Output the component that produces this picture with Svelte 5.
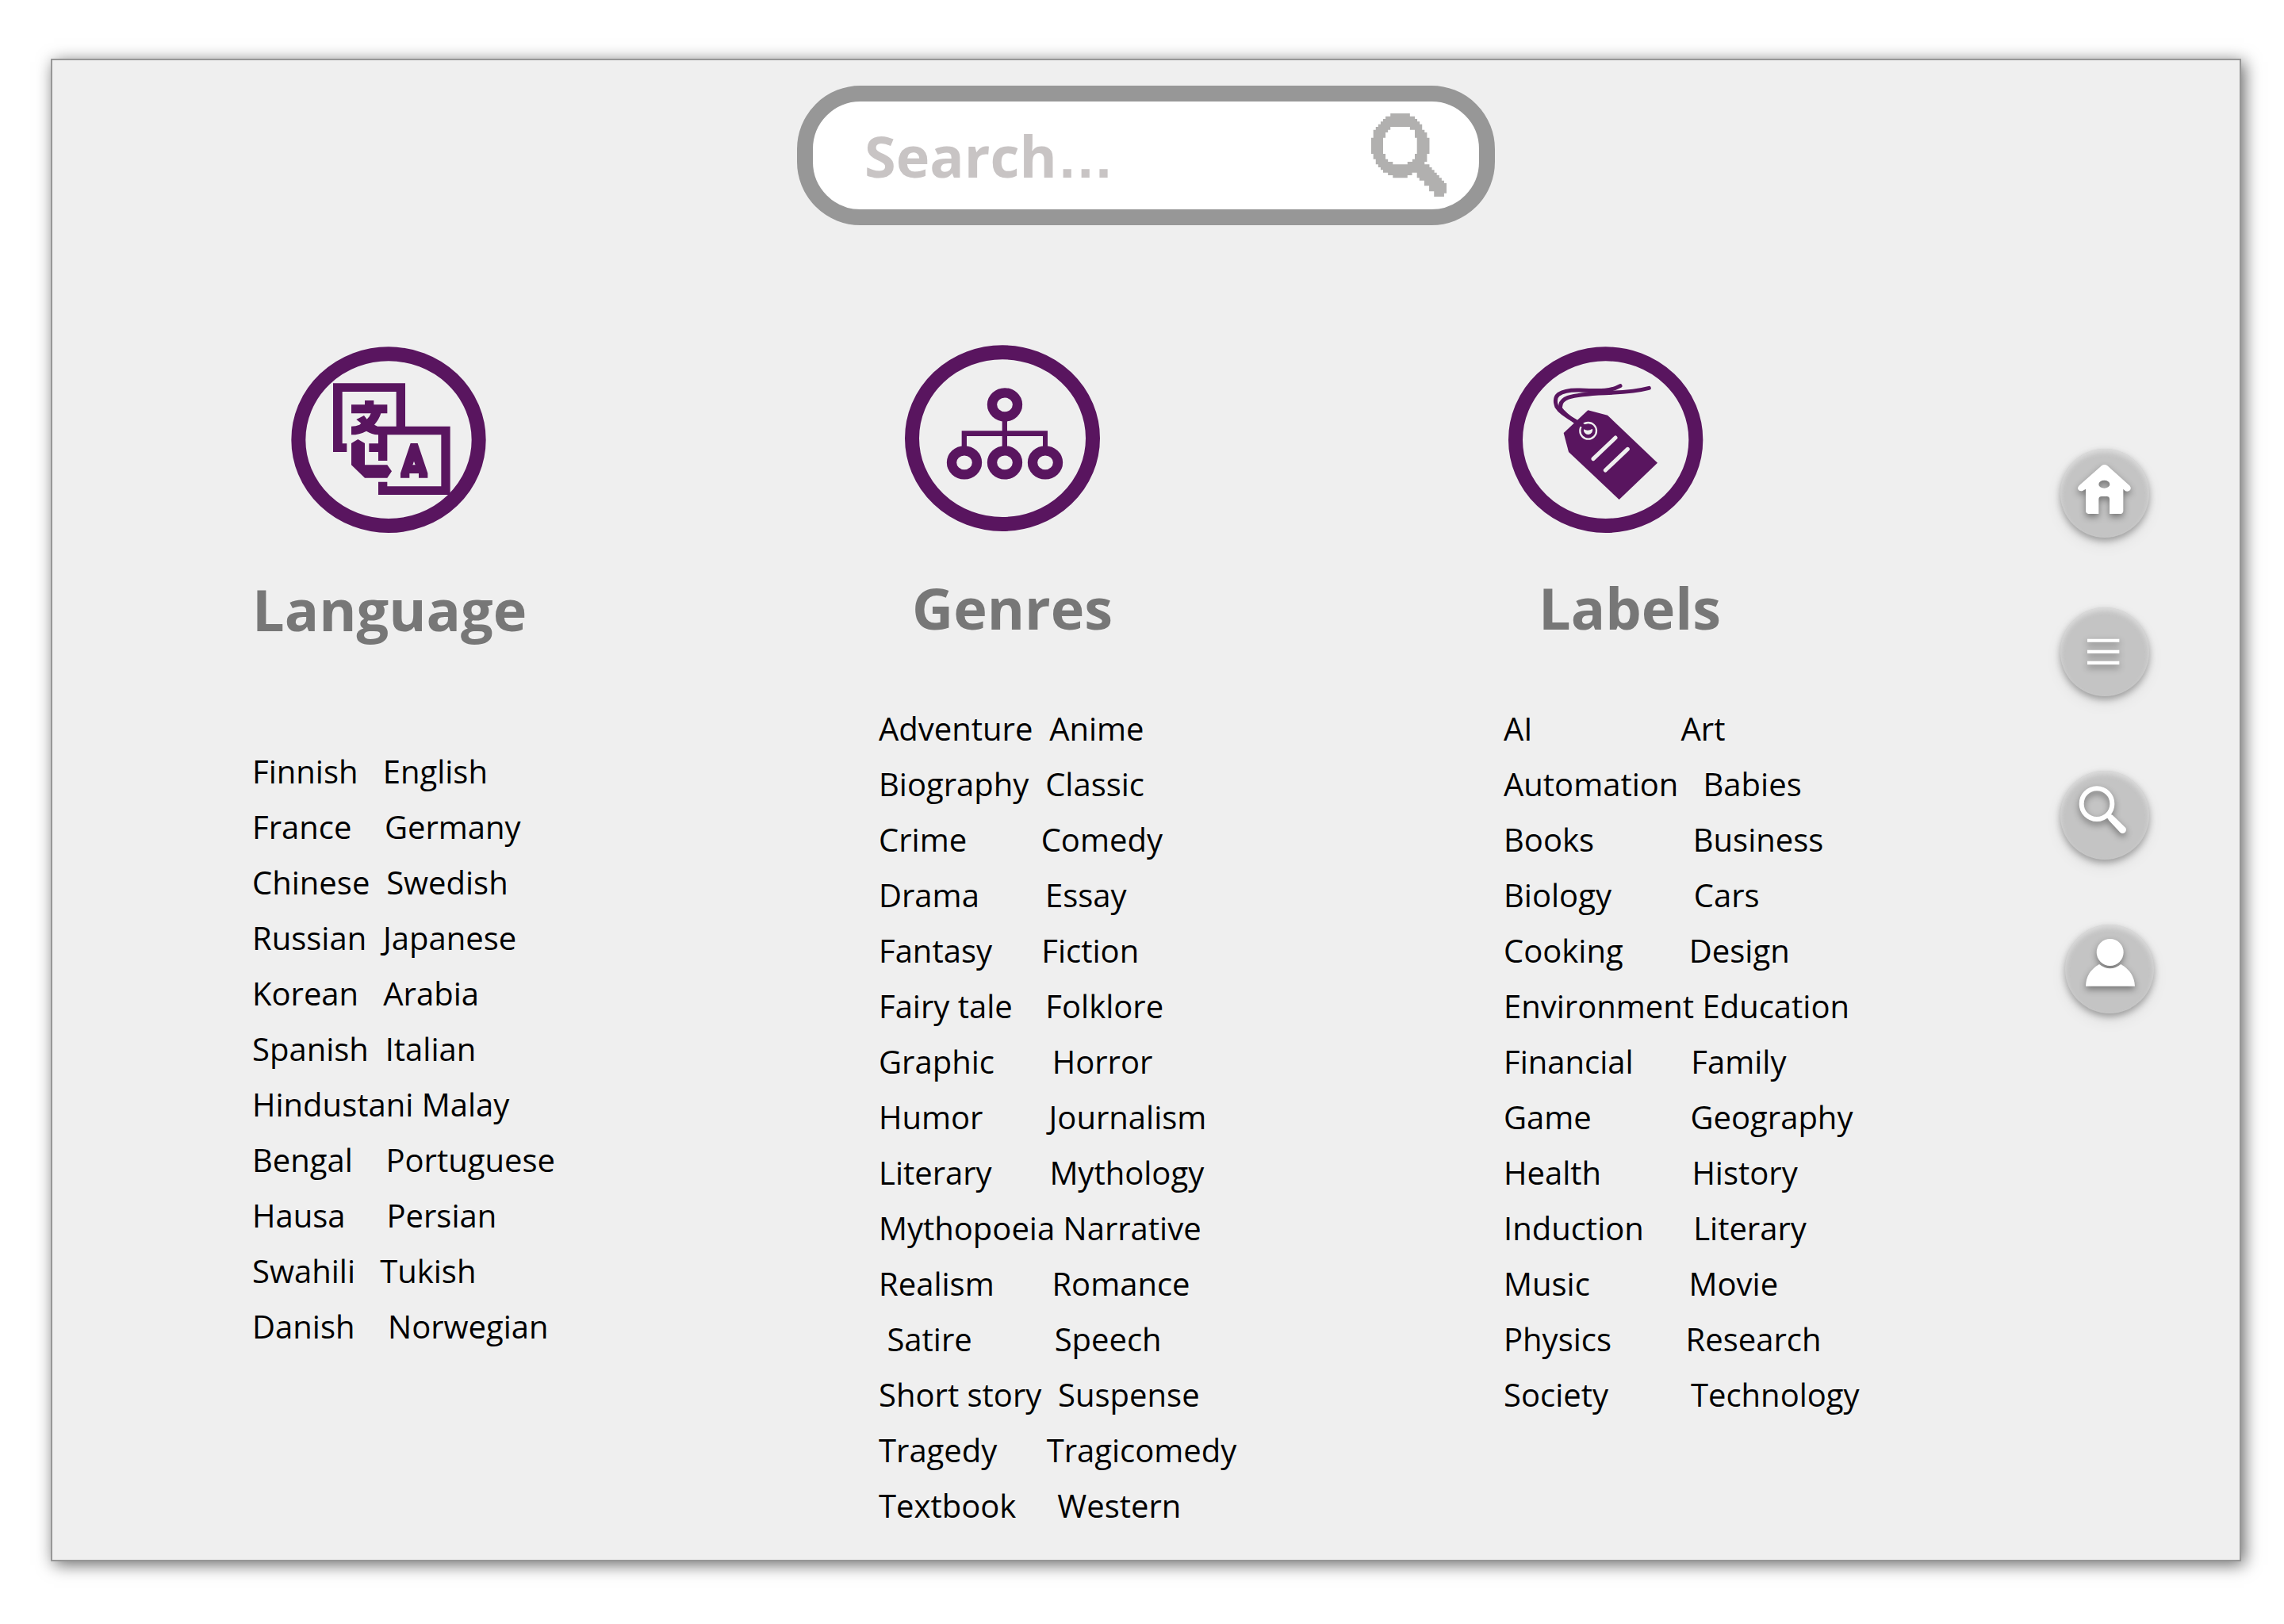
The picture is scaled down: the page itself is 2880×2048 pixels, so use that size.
<script>
  const columns = [
    {
      id: 'language',
      title: 'Language',
      rows: [
        ['Finnish', 3, 'English'],
        ['France', 4, 'Germany'],
        ['Chinese', 2, 'Swedish'],
        ['Russian', 2, 'Japanese'],
        ['Korean', 3, 'Arabia'],
        ['Spanish', 2, 'Italian'],
        ['Hindustani', 1, 'Malay'],
        ['Bengal', 4, 'Portuguese'],
        ['Hausa', 5, 'Persian'],
        ['Swahili', 3, 'Tukish'],
        ['Danish', 4, 'Norwegian']
      ]
    },
    {
      id: 'genres',
      title: 'Genres',
      rows: [
        ['Adventure', 2, 'Anime'],
        ['Biography', 2, 'Classic'],
        ['Crime', 9, 'Comedy'],
        ['Drama', 8, 'Essay'],
        ['Fantasy', 6, 'Fiction'],
        ['Fairy tale', 4, 'Folklore'],
        ['Graphic', 7, 'Horror'],
        ['Humor', 8, 'Journalism'],
        ['Literary', 7, 'Mythology'],
        ['Mythopoeia', 1, 'Narrative'],
        ['Realism', 7, 'Romance'],
        [' Satire', 10, 'Speech'],
        ['Short story', 2, 'Suspense'],
        ['Tragedy', 6, 'Tragicomedy'],
        ['Textbook', 5, 'Western']
      ]
    },
    {
      id: 'labels',
      title: 'Labels',
      rows: [
        ['AI', 18, 'Art'],
        ['Automation', 3, 'Babies'],
        ['Books', 12, 'Business'],
        ['Biology', 10, 'Cars'],
        ['Cooking', 8, 'Design'],
        ['Environment', 1, 'Education'],
        ['Financial', 7, 'Family'],
        ['Game', 12, 'Geography'],
        ['Health', 11, 'History'],
        ['Induction', 6, 'Literary'],
        ['Music', 12, 'Movie'],
        ['Physics', 9, 'Research'],
        ['Society', 10, 'Technology']
      ]
    }
  ];
</script>

<div class="page">
  <main class="panel">
    <form class="search" role="search" onsubmit={(e) => e.preventDefault()}>
      <div class="field">
        <input id="search" type="text" placeholder=" " />
        <label for="search">Search<span>…</span></label>
      </div>
      <button class="go" type="submit" aria-label="Search">
        <svg viewBox="1278 36 247 315" preserveAspectRatio="none" aria-hidden="true">
          <path
            fill="#b1b0af"
            fill-rule="evenodd"
            d="M1341 36H1405V47H1421V57H1429V67H1437V77H1445V98H1453V108H1461V128H1469V189H1461V219H1453V229H1469V240H1477V250H1485V260H1493V270H1501V280H1509V290H1517V300H1525V338H1517V351H1484V331H1468V310H1452V290H1436V280H1428V260H1412V270H1397V280H1349V270H1333V260H1317V250H1309V240H1301V229H1293V209H1285V189H1278V128H1285V98H1293V87H1301V77H1309V67H1317V57H1325V47H1341ZM1341 87V98H1333V108H1325V128H1317V189H1325V209H1333V219H1349V229H1397V219H1413V209H1421V189H1428V128H1421V98H1405V87Z"
          />
        </svg>
      </button>
    </form>

    <div class="content">
      <div class="columns">
        {#each columns as col (col.id)}
          <section class="column {col.id}">
            <div class="badge">
              {#if col.id === 'language'}
                <svg viewBox="51 50 738 708" aria-hidden="true">
                  <ellipse class="ring" cx="420" cy="403" rx="341" ry="325" />
                  <path class="solid" d="M210 189H483V352H653V611H381V562H415V579H619V384H415V482H381V449H346V417H381V384Q355 382 336 370Q310 384 279 384V352Q296 352 310 346L316 340L298 326L327 311L338 325Q350 314 353 303H279V270H330V254H364V270H415V303H391Q384 326 366 346L378 352H449V221H245V417H262V449H210Z" />
                  <path class="solid" d="M279 416L304 401L330 416V498H415L432 522L415 547H330L279 498Z" />
                  <path class="solid" fill-rule="evenodd" d="M503 416H530L568 529V547H534V530H499V547H465V529ZM516 484L511 498H521Z" />
                </svg>
              {:else if col.id === 'genres'}
                <svg viewBox="63 44 738 708" aria-hidden="true">
                  <ellipse class="ring" cx="432" cy="397" rx="342" ry="325" />
                  <path class="solid" d="M431 320H450V369H603V430H585V389H450V430H431V389H297V430H278V369H431Z" />
                  <ellipse class="node" cx="441" cy="270" rx="48" ry="45" />
                  <ellipse class="node" cx="288" cy="489" rx="48" ry="45" />
                  <ellipse class="node" cx="441" cy="489" rx="48" ry="45" />
                  <ellipse class="node" cx="594" cy="489" rx="48" ry="45" />
                </svg>
              {:else}
                <svg viewBox="65 50 738 708" aria-hidden="true">
                  <ellipse class="ring" cx="433" cy="403" rx="341" ry="325" />
                  <path class="solid" d="M366 291L440 310L629 490L484 629L293 449L274 377Z" />
                  <path class="string" d="M352 350Q340 346 318 332Q262 302 248 278Q236 246 254 231Q280 213 335 215Q400 218 430 216Q460 214 488 199" />
                  <path class="string" d="M318 334Q276 305 262 285Q258 255 290 243Q330 230 430 226Q540 222 597 207" />
                  <circle cx="367" cy="369" r="31" fill="none" stroke="#efefef" stroke-width="7" />
                  <path d="M350 363Q366 372 383 361A17 17 0 1 1 350 363Z" fill="#efefef" />
                  <path class="string" d="M320 334L358 355Q366 359 378 353" />
                  <path d="M470 395L386 475M516 438L432 518" fill="none" stroke="#efefef" stroke-width="15" stroke-linecap="round" />
                </svg>
              {/if}
            </div>
            <h2>{col.title}</h2>
            <ul>
              {#each col.rows as [left, gap, right]}
                <li><span>{left}</span>{' '.repeat(gap)}<span>{right}</span></li>
              {/each}
            </ul>
          </section>
        {/each}
      </div>

      <nav aria-label="Main">
        <button type="button" aria-label="Home">
          <svg viewBox="84 78 336 336" aria-hidden="true">
            <path fill="#fff" fill-rule="evenodd" d="M240 142Q251 134 262 142L347 218Q353 226 348 234Q340 242 330 238L322 230V314Q320 324 310 324H270V268Q269 258 260 258H240Q230 258 229 268V324H190Q180 322 180 312V230L168 237Q156 240 150 230Q149 222 156 216ZM229 212A21 15 0 1 0 271 212A21 15 0 1 0 229 212Z" />
          </svg>
        </button>
        <button type="button" aria-label="Menu">
          <svg viewBox="84 678 336 336" aria-hidden="true">
            <path fill="#fff" d="M186 797H307V809H186ZM186 839H307V852H186ZM186 881H307V894H186Z" />
          </svg>
        </button>
        <button type="button" aria-label="Search">
          <svg viewBox="84 96 336 336" aria-hidden="true">
            <circle cx="222" cy="221" r="58" fill="none" stroke="#fff" stroke-width="18" />
            <path fill="#fff" d="M260 272L274 260Q282 262 288 270L331 312Q336 322 328 330Q318 336 310 329L268 284Q264 278 260 272Z" />
          </svg>
        </button>
        <button type="button" aria-label="Profile">
          <svg viewBox="102 678 336 336" aria-hidden="true">
            <circle cx="272" cy="783" r="51" fill="#fff" />
            <path fill="#fff" d="M180 911Q180 858 231 828Q272 860 313 828Q364 858 366 911Z" />
          </svg>
        </button>
      </nav>
    </div>
  </main>
</div>

<style>
  :global(body) {
    background: #fff;
  }
  .page {
    padding: 74px 54px 80px 64px;
    font-family: 'Open Sans', 'Noto Sans', sans-serif;
  }
  .panel {
    padding: 32px 0 33px;
    border: 2px solid #979797;
    background: #efefef;
    box-shadow: 4px 4px 20px rgba(0, 0, 0, 0.6);
  }
  .search {
    box-sizing: border-box;
    display: flex;
    align-items: center;
    width: 880px;
    height: 176px;
    margin: 0 auto;
    padding: 0 41px 2px 65px;
    border: 20px solid #979797;
    border-radius: 80px;
    background: #fff;
  }
  .field {
    display: grid;
    flex: 1;
    align-items: center;
    padding-top: 4px;
  }
  .field input,
  .field label {
    grid-area: 1 / 1;
    font-family: inherit;
    font-size: 72px;
    font-weight: 700;
    line-height: 98px;
    color: #c8c4c4;
  }
  .field input {
    width: 100%;
    height: 98px;
    padding: 0;
    border: 0;
    outline: 0;
    background: none;
  }
  .field label {
    pointer-events: none;
  }
  .field label span {
    font-family: 'Liberation Sans', sans-serif;
    font-weight: 700;
  }
  .field input:not(:placeholder-shown) + label {
    visibility: hidden;
  }
  button {
    padding: 0;
    border: 0;
    background: none;
    cursor: pointer;
  }
  svg {
    display: block;
    width: 100%;
    height: 100%;
  }
  .go {
    width: 95px;
    height: 105px;
  }
  .content {
    display: flex;
    padding: 151px 108px 0 252px;
  }
  .columns {
    display: grid;
    flex: 1;
    grid-template-columns: 790fr 788fr 702fr;
  }
  .language {
    --badge-inset: 49px;
    --title-inset: 0px;
    --title-gap: 46px;
    --list-gap: 121px;
    padding-top: 2px;
  }
  .genres {
    --badge-inset: 33px;
    --title-inset: 42px;
    --title-gap: 46px;
    --list-gap: 69px;
  }
  .labels {
    --badge-inset: 6px;
    --title-inset: 44px;
    --title-gap: 44px;
    --list-gap: 69px;
    padding-top: 2px;
  }
  .badge {
    width: 246px;
    height: 236px;
    margin-left: var(--badge-inset);
  }
  .ring {
    fill: none;
    stroke: #59155f;
    stroke-width: 54;
  }
  .solid {
    fill: #59155f;
  }
  .node {
    fill: #efefef;
    stroke: #59155f;
    stroke-width: 37;
  }
  .string {
    fill: none;
    stroke: #59155f;
    stroke-width: 15;
    stroke-linecap: round;
  }
  h2 {
    margin: var(--title-gap) 0 var(--list-gap) var(--title-inset);
    font-size: 72px;
    font-weight: 700;
    line-height: 98px;
    color: #777;
  }
  ul {
    margin: 0;
    padding: 0;
    list-style: none;
  }
  li {
    font-size: 40px;
    line-height: 70px;
    color: #000;
    white-space: pre;
  }
  nav {
    display: grid;
    grid-template-rows: 200px 206px 194px 112px;
    align-content: start;
    width: 118px;
    padding-top: 131px;
  }
  nav button {
    width: 112px;
    height: 112px;
    border-radius: 50%;
    background: #c4c4c4;
    box-shadow:
      0 4px 8px rgba(0, 0, 0, 0.3),
      0 8px 20px rgba(0, 0, 0, 0.08),
      inset 0 4px 6px rgba(239, 239, 239, 0.6);
  }
  nav button:last-child {
    justify-self: end;
  }
  nav svg {
    filter: drop-shadow(0 4px 4px rgba(0, 0, 0, 0.4));
  }
</style>
